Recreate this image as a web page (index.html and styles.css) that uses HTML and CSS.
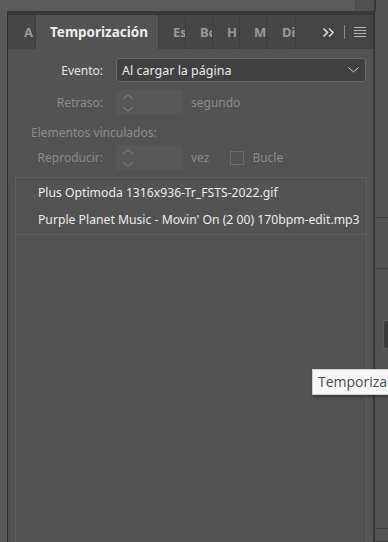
FILE: index.html
```html
<!DOCTYPE html>
<html lang="es">
<head>
  <meta charset="UTF-8">
  <meta name="viewport" content="width=device-width, initial-scale=1.0">
  <title>Temporización</title>
  <link rel="stylesheet" href="styles.css">
</head>
<body>
  <div class="topstrip">
    <div class="top-a"></div>
    <div class="top-b"></div>
    <div class="top-line"></div>
    <div class="top-c"></div>
  </div>
  <div class="workspace">
    <div class="gutter"></div>

    <div class="panel">
      <div class="tabbar">
        <div class="tab tab-a">A</div>
        <div class="tab active">Temporización</div>
        <div class="tab">Es</div>
        <div class="tab">Bc</div>
        <div class="tab">H</div>
        <div class="tab">M</div>
        <div class="tab tab-wide">Di</div>
        <div class="tab-tools">
          <svg class="more" width="11" height="9" viewBox="0 0 11 9">
            <path d="M0.5 0.5L4.5 4.5L0.5 8.5M6 0.5L10 4.5L6 8.5" fill="none" stroke="#d2d2d2" stroke-width="1.6"/>
          </svg>
          <span class="divider"></span>
          <svg class="menu" width="12" height="10" viewBox="0 0 12 10">
            <path d="M0 0.5H12M0 3.5H12M0 6.5H12M0 9.5H12" stroke="#b4b4b4" stroke-width="1"/>
          </svg>
        </div>
      </div>

      <div class="form">
        <div class="row">
          <label class="lbl">Evento:</label>
          <div class="select">
            <span>Al cargar la página</span>
            <svg width="11" height="6" viewBox="0 0 11 6">
              <path d="M0.5 0.5L5.5 5L10.5 0.5" fill="none" stroke="#cfcfcf" stroke-width="1"/>
            </svg>
          </div>
        </div>

        <div class="row row-step disabled">
          <label class="lbl">Retraso:</label>
          <div class="stepper">
            <svg width="12" height="18" viewBox="0 0 12 18">
              <path d="M1 5L6 1L11 5M1 13L6 17L11 13" fill="none" stroke="#828282" stroke-width="1"/>
            </svg>
          </div>
          <span class="unit">segundo</span>
        </div>

        <div class="group disabled">Elementos vinculados:</div>

        <div class="row row-step last-row disabled">
          <label class="lbl">Reproducir:</label>
          <div class="stepper">
            <svg width="12" height="18" viewBox="0 0 12 18">
              <path d="M1 5L6 1L11 5M1 13L6 17L11 13" fill="none" stroke="#828282" stroke-width="1"/>
            </svg>
          </div>
          <span class="unit">vez</span>
          <span class="check"></span>
          <span class="check-lbl">Bucle</span>
        </div>
      </div>

      <div class="list">
        <div class="item">Plus Optimoda 1316x936-Tr_FSTS-2022.gif</div>
        <div class="item last">Purple Planet Music - Movin' On (2 00) 170bpm-edit.mp3</div>
      </div>
    </div>

    <div class="dock">
      <div class="dock-cell c1"></div>
      <div class="dock-cell c2"></div>
      <div class="dock-cell c3">
        <div class="dock-btn"></div>
      </div>
      <div class="dock-cell c4"></div>
    </div>
  </div>

  <div class="tooltip">Temporiza</div>
</body>
</html>
```

FILE: styles.css
```css
body {
  margin: 0;
  width: 388px;
  height: 542px;
  overflow: hidden;
  background-color: #535353;
  font-family: "Noto Sans", "Open Sans", sans-serif;
  font-size: 12px;
  color: #e4e4e4;
  position: relative;
}

.topstrip {
  display: flex;
  height: 11px;
}
.top-a {
  width: 355px;
  background-color: #5b5b5b;
}
.top-b {
  width: 18px;
  background-color: #505050;
  border-left: 1px solid #4a4a4a;
}
.top-line {
  width: 2px;
  background-color: #363636;
}
.top-c {
  flex: 1;
  background-color: #535353;
}

.workspace {
  display: flex;
  height: 531px;
}
.gutter {
  width: 7px;
  background-color: #5a5a5a;
}

.panel {
  width: 365px;
  border-left: 1px solid #2f2f2f;
  border-right: 2px solid #363636;
  border-top: 4px solid #383838;
  background-color: #535353;
  display: flex;
  flex-direction: column;
}

/* tabs */
.tabbar {
  display: flex;
  height: 34px;
  background-color: #444444;
}
.tab {
  width: 12px;
  padding-left: 14px;
  overflow: hidden;
  white-space: nowrap;
  line-height: 34px;
  font-weight: bold;
  font-size: 13px;
  color: #9a9a9a;
  background-color: #464646;
  border-right: 1px solid #3d3d3d;
}
.tab-a {
  width: 11px;
  padding-left: 16px;
}
.tab-wide {
  width: 13px;
  padding-left: 15px;
}
.tab.active {
  width: auto;
  padding: 0 10px 0 14px;
  color: #ececec;
  background-color: #535353;
  font-size: 13.5px;
}
.tab-tools {
  flex: 1;
  display: flex;
  align-items: center;
  justify-content: flex-end;
  padding-right: 7px;
}
.divider {
  width: 1px;
  height: 14px;
  background-color: #8a8a8a;
  margin: 0 9px 0 10px;
}

/* form */
.form {
  padding: 9px 7px 0 23px;
}
.row {
  display: flex;
  align-items: center;
  margin-bottom: 8px;
}
.row.last-row {
  margin-bottom: 7px;
}
.lbl {
  width: 72px;
  margin-right: 13px;
  text-align: right;
}
.disabled {
  color: #8b8b8b;
}
.select {
  flex: 1;
  height: 22px;
  display: flex;
  align-items: center;
  justify-content: space-between;
  padding: 0 6px 0 5px;
  background-color: #414141;
  border: 1px solid #6a6a6a;
  border-radius: 3px;
  color: #eaeaea;
  font-size: 12.5px;
}
.stepper {
  width: 67px;
  height: 25px;
  background-color: #585858;
  display: flex;
  align-items: center;
  padding-left: 6px;
  box-sizing: border-box;
}
.unit {
  margin-left: 8px;
}
.group {
  margin: 0 0 3px;
  line-height: 19px;
}
.check {
  width: 12px;
  height: 12px;
  border: 1px solid #6c6c6c;
  margin-left: 21px;
}
.check-lbl {
  margin-left: 8px;
}

/* linked items */
.list {
  flex: 1;
  margin: 0 6px 0 7px;
  border: 1px solid #5f5f5f;
  border-bottom: none;
  padding-top: 2px;
}
.item {
  height: 27px;
  line-height: 26px;
  padding-left: 22px;
  white-space: nowrap;
  color: #ececec;
  font-size: 12.2px;
}
.item.last {
  border-bottom: 1px solid #5f5f5f;
}

/* right dock */
.dock {
  flex: 1;
  display: flex;
  flex-direction: column;
}
.dock-cell {
  border-bottom: 1px solid #3d3d3d;
}
.c1 { height: 206px; }
.c2 { height: 50px; }
.c3 {
  height: 260px;
  padding-top: 51px;
  padding-left: 8px;
  box-sizing: border-box;
}
.c4 { flex: 1; }
.dock-btn {
  height: 27px;
  background-color: #3a3a3a;
  border: 1px solid #5c5c5c;
  border-right: none;
  border-radius: 3px 0 0 3px;
}

.tooltip {
  position: absolute;
  left: 312px;
  right: 0;
  top: 369px;
  height: 24px;
  line-height: 24px;
  padding-left: 5px;
  white-space: nowrap;
  font-family: "Open Sans", sans-serif;
  font-size: 14px;
  color: #4a4a4a;
  background-color: #f7f7f7;
  border: 1px solid #d0d0d0;
  border-right: none;
  box-shadow: 1px 2px 3px rgba(0, 0, 0, 0.35);
}
```
